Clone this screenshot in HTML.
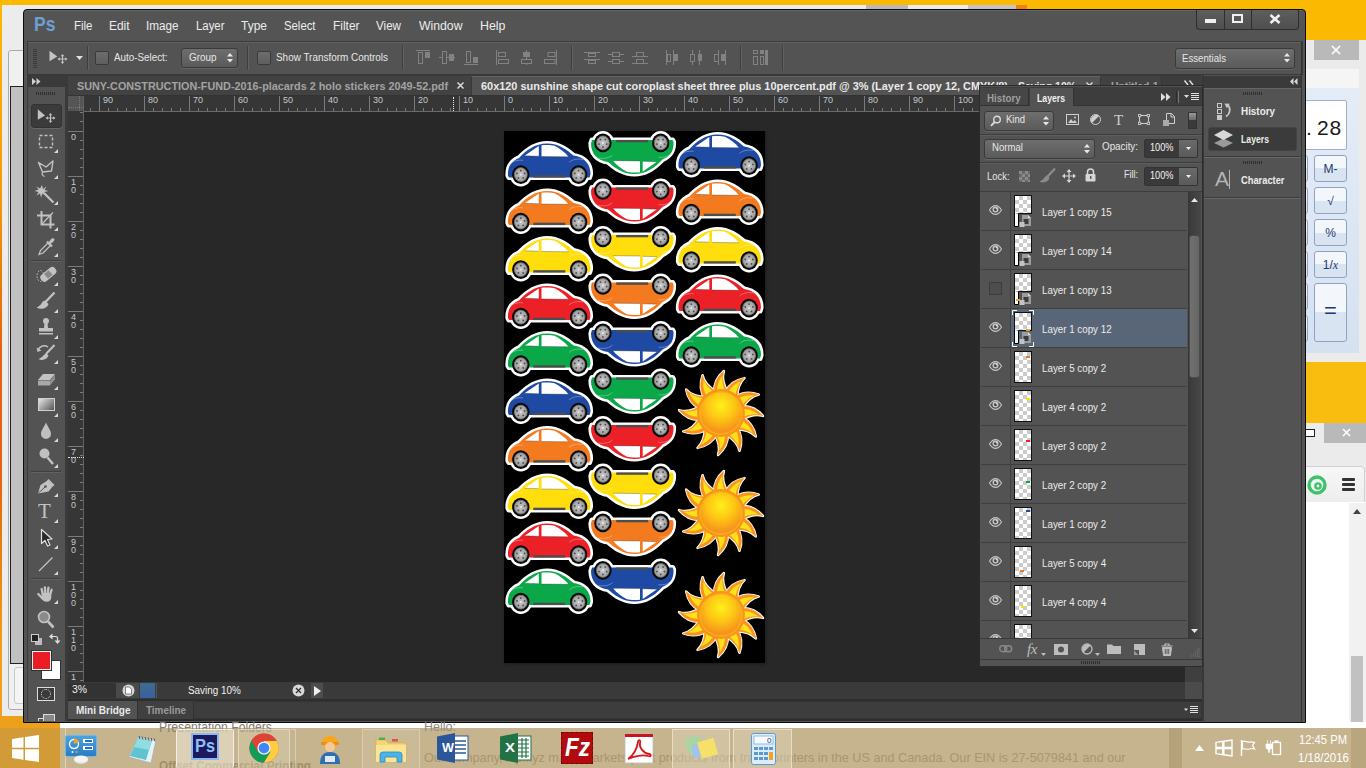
<!DOCTYPE html>
<html><head><meta charset="utf-8"><title>Photoshop</title>
<style>
*{box-sizing:border-box;margin:0;padding:0}
html,body{width:1366px;height:768px;overflow:hidden;background:#fcb902;font-family:"Liberation Sans",sans-serif;font-size:11px;color:#e6e6e6}
.a,div,span,svg{position:absolute}
div,span{white-space:nowrap}
svg{overflow:visible}
.t{color:#e6e6e6;font-size:11px;line-height:14px;letter-spacing:-0.2px}
.m{font-size:13.5px;line-height:16px;color:#e9e9e9;top:18px;letter-spacing:-0.3px}
.sep{width:1px;background:#3e3e3e;border-right:1px solid #626262;width:2px}
.cb{width:14px;height:14px;border:1px solid #3a3a3a;border-radius:2px;background:linear-gradient(#6d6d6d,#5e5e5e)}
.dd{border:1px solid #3a3a3a;border-radius:3px;background:linear-gradient(#6e6e6e,#5a5a5a);box-shadow:0 1px 0 #646464}
.rt{font-size:9px;line-height:9px;color:#c3c9cf;letter-spacing:0}
.lrow{left:981px;width:206px;height:39px;border-bottom:1px solid #3f3f3f}
.ln{left:59px;top:12px;font-size:11px;line-height:14px;color:#ececec;letter-spacing:-0.15px}
.th{left:33px;top:3px;width:18px;height:32px;border:1px solid #111;background-color:#fff;background-image:linear-gradient(45deg,#ccc 25%,transparent 25%,transparent 75%,#ccc 75%),linear-gradient(45deg,#ccc 25%,transparent 25%,transparent 75%,#ccc 75%);background-size:8px 8px;background-position:0 0,4px 4px}
.eyec{left:0;top:0;width:30px;height:38px;border-right:1px solid #3f3f3f}
</style></head><body>
<div id="desk" style="left:0;top:0;width:1366px;height:768px;background:#fcb902"><div style="left:0;top:0;width:2px;height:768px;background:linear-gradient(#fcb902 0,#f59a08 25%,#e8640a 45%,#e8640a 62%,#f0a01c 85%,#f0a01c 100%)"></div><div style="left:2px;top:5px;width:30px;height:711px;background:#ececec"></div><div style="left:8px;top:50px;width:20px;height:660px;background:#f0f0f0;border:1px solid #ababab;border-radius:3px"></div><div style="left:10px;top:86px;width:20px;height:578px;background:#c1c1c1;border:1px solid #222"></div><div style="left:14px;top:667px;width:14px;height:37px;background:#f4f4f4;border:1px solid #c8c8c8;border-radius:3px"></div><div style="left:0;top:716px;width:60px;height:14px;background:#eda11a"></div><div style="left:2px;top:5px;width:1015px;height:6px;background:#ececec"></div><div style="left:866px;top:5px;width:42px;height:6px;background:#b9b9b9"></div><div style="left:968px;top:5px;width:48px;height:6px;background:#c4c4c4"></div><div style="left:1016px;top:5px;width:11px;height:6px;background:#f0801a"></div><div style="left:1300px;top:40px;width:66px;height:392px;background:#ebebeb"></div><div style="left:1314px;top:40px;width:45px;height:20px;background:#b9b9b9"></div><svg style="left:1331px;top:45px" width="10" height="10"><path d="M1 1L9 9M9 1L1 9" stroke="#fff" stroke-width="1.6" fill="none"/></svg><div style="left:1300px;top:69px;width:59px;height:19px;background:#f5f5f5"></div><div style="left:1300px;top:88px;width:59px;height:266px;background:linear-gradient(#e4ecf7,#d6e1f0)"></div><div style="left:1300px;top:100px;width:47px;height:50px;background:#fff;border:1px solid #9fb0c8;border-radius:2px"></div><div style="left:1306px;top:116px;font-size:21px;line-height:24px;color:#1a1a1a;letter-spacing:1.5px">.</div><div style="left:1317px;top:116px;font-size:21px;line-height:24px;color:#1a1a1a;letter-spacing:0.8px">28</div><div style="left:1314px;top:155px;width:33px;height:27px;border:1px solid #8fa3c0;border-radius:3px;background:linear-gradient(#f3f7fc 50%,#d9e4f2 50%)"></div><div style="left:1314px;top:162px;width:33px;text-align:center;font-size:12px;line-height:14px;color:#1e3a6e">M-</div><div style="left:1314px;top:187px;width:33px;height:27px;border:1px solid #8fa3c0;border-radius:3px;background:linear-gradient(#f3f7fc 50%,#d9e4f2 50%)"></div><div style="left:1314px;top:194px;width:33px;text-align:center;font-size:12px;line-height:14px;color:#1e3a6e">√</div><div style="left:1314px;top:219px;width:33px;height:27px;border:1px solid #8fa3c0;border-radius:3px;background:linear-gradient(#f3f7fc 50%,#d9e4f2 50%)"></div><div style="left:1314px;top:226px;width:33px;text-align:center;font-size:12px;line-height:14px;color:#1e3a6e">%</div><div style="left:1314px;top:251px;width:33px;height:27px;border:1px solid #8fa3c0;border-radius:3px;background:linear-gradient(#f3f7fc 50%,#d9e4f2 50%)"></div><div style="left:1314px;top:258px;width:33px;text-align:center;font-size:12px;line-height:14px;color:#1e3a6e">1/<i style="font-family:Liberation Serif,serif">x</i></div><div style="left:1290px;top:155px;width:18px;height:27px;border:1px solid #8fa3c0;border-radius:3px;background:linear-gradient(#f3f7fc 50%,#d9e4f2 50%)"></div><div style="left:1290px;top:187px;width:18px;height:27px;border:1px solid #8fa3c0;border-radius:3px;background:linear-gradient(#f3f7fc 50%,#d9e4f2 50%)"></div><div style="left:1290px;top:219px;width:18px;height:27px;border:1px solid #8fa3c0;border-radius:3px;background:linear-gradient(#f3f7fc 50%,#d9e4f2 50%)"></div><div style="left:1290px;top:251px;width:18px;height:27px;border:1px solid #8fa3c0;border-radius:3px;background:linear-gradient(#f3f7fc 50%,#d9e4f2 50%)"></div><div style="left:1290px;top:283px;width:18px;height:27px;border:1px solid #8fa3c0;border-radius:3px;background:linear-gradient(#f3f7fc 50%,#d9e4f2 50%)"></div><div style="left:1290px;top:315px;width:18px;height:27px;border:1px solid #8fa3c0;border-radius:3px;background:linear-gradient(#f3f7fc 50%,#d9e4f2 50%)"></div><div style="left:1314px;top:283px;width:33px;height:59px;border:1px solid #8fa3c0;border-radius:3px;background:linear-gradient(#f3f7fc 50%,#d9e4f2 50%)"></div><div style="left:1314px;top:298px;width:33px;text-align:center;font-size:22px;line-height:26px;color:#1e3a6e">=</div><div style="left:1300px;top:292px;width:59px;height:60px;background:transparent"></div><div style="left:1300px;top:353px;width:66px;height:10px;background:#ebebeb"></div><div style="left:1300px;top:362px;width:66px;height:61px;background:#f9bd10"></div><div style="left:1300px;top:423px;width:66px;height:305px;background:#ebebeb"></div><div style="left:1324px;top:423px;width:42px;height:20px;background:#b9b9b9"></div><svg style="left:1342px;top:428px" width="9" height="9"><path d="M1 1L8 8M8 1L1 8" stroke="#fff" stroke-width="1.5" fill="none"/></svg><div style="left:1304px;top:429px;width:11px;height:8px;border:1.5px solid #222;background:#fff"></div><div style="left:1300px;top:466px;width:65px;height:37px;background:linear-gradient(#f7f7f7,#ededed);border:1px solid #d0d0d0;border-radius:0 4px 0 0"></div><div style="left:1300px;top:502px;width:66px;height:226px;background:#fff"></div><div style="left:1349px;top:503px;width:17px;height:225px;background:#f1f1f1"></div><div style="left:1351px;top:656px;width:12px;height:73px;background:#c1c1c1"></div><svg style="left:1353px;top:509px" width="8" height="5"><path d="M0 5L4 0L8 5Z" fill="#444"/></svg><svg style="left:1306px;top:474px" width="22" height="22"><circle cx="11" cy="11" r="8" fill="none" stroke="#3bc46b" stroke-width="3.4"/><circle cx="12" cy="12" r="2.6" fill="none" stroke="#3bc46b" stroke-width="2.4"/></svg><div style="left:1342px;top:478px;width:13px;height:2.5px;background:#333;border-radius:1px;box-shadow:0 5px 0 #333,0 10px 0 #333"></div><div style="left:60px;top:722px;width:1306px;height:8px;background:#fff"></div></div><div id="ps" style="left:23px;top:9px;width:1283px;height:714px;background:#545454;border:1px solid #0c0c0c;border-radius:4px 4px 0 0;box-shadow:inset 0 1px 0 #666"></div><div style="left:34px;top:10px;font-size:21px;line-height:28px;color:#6c9fd2;font-weight:bold;transform-origin:0 0;transform:scaleX(0.8370);">Ps</div><div style="left:74px;top:18px;font-size:12px;line-height:16px;color:#ececec;transform-origin:0 0;transform:scaleX(0.9568);">File</div><div style="left:109px;top:18px;font-size:12px;line-height:16px;color:#ececec;transform-origin:0 0;transform:scaleX(0.9914);">Edit</div><div style="left:146px;top:18px;font-size:12px;line-height:16px;color:#ececec;transform-origin:0 0;transform:scaleX(0.9745);">Image</div><div style="left:196px;top:18px;font-size:12px;line-height:16px;color:#ececec;transform-origin:0 0;transform:scaleX(0.9494);">Layer</div><div style="left:240.5px;top:18px;font-size:12px;line-height:16px;color:#ececec;transform-origin:0 0;transform:scaleX(0.9994);">Type</div><div style="left:284px;top:18px;font-size:12px;line-height:16px;color:#ececec;transform-origin:0 0;transform:scaleX(0.9445);">Select</div><div style="left:333px;top:18px;font-size:12px;line-height:16px;color:#ececec;transform-origin:0 0;transform:scaleX(0.9938);">Filter</div><div style="left:375.5px;top:18px;font-size:12px;line-height:16px;color:#ececec;transform-origin:0 0;transform:scaleX(0.9693);">View</div><div style="left:419px;top:18px;font-size:12px;line-height:16px;color:#ececec;transform-origin:0 0;transform:scaleX(1.0192);">Window</div><div style="left:480px;top:18px;font-size:12px;line-height:16px;color:#ececec;transform-origin:0 0;transform:scaleX(1.0332);">Help</div><div style="left:1196px;top:10px;width:103px;height:20px;border:1px solid #2e2e2e;border-top:none;border-radius:0 0 4px 4px;background:linear-gradient(#5d5d5d,#4f4f4f)"></div><div style="left:1224px;top:10px;width:1px;height:19px;background:#2e2e2e"></div><div style="left:1251px;top:10px;width:1px;height:19px;background:#2e2e2e"></div><div style="left:1205px;top:19px;width:11px;height:4px;background:#f0f0f0"></div><div style="left:1232px;top:14px;width:11px;height:9px;border:2px solid #f0f0f0"></div><svg style="left:1269px;top:14px" width="12" height="10"><path d="M1.5 1L10.5 9M10.5 1L1.5 9" stroke="#f0f0f0" stroke-width="2.6" fill="none"/></svg><div style="left:27px;top:41px;width:1276px;height:34px;background:#535353;border:1px solid #3a3a3a;border-bottom:1px solid #383838"></div><div style="left:28px;top:42px;width:1274px;height:1px;background:#626262"></div><div style="left:33px;top:49px;width:4px;height:20px;background:repeating-linear-gradient(#3a3a3a 0,#3a3a3a 1px,transparent 1px,transparent 2px)"></div><svg style="left:48px;top:50px" width="22" height="16"><path d="M1.500 0.800L1.500 11.200L9.300 6.500Z" fill="#c4c4c4"/><path d="M14.500 5.500v7M11 9h7" stroke="#c4c4c4" stroke-width="1.100" fill="none"/><path d="M14.500 4l-1.800 2.300h3.600zM14.500 14l-1.800-2.300h3.600zM9.500 9l2.300-1.800v3.600zM19.500 9l-2.300-1.800v3.600z" fill="#c4c4c4"/></svg><svg style="left:76px;top:56px" width="7" height="4"><path d="M0 0h7L3.500 4z" fill="#e0e0e0"/></svg><div class="sep" style="left:87px;top:46px;height:24px"></div><div class="cb" style="left:95px;top:51px"></div><div style="left:114px;top:51px;font-size:10px;line-height:14px;color:#e6e6e6;transform-origin:0 0;transform:scaleX(0.9820);">Auto-Select:</div><div class="dd" style="left:181px;top:48px;width:57px;height:20px"></div><div style="left:189px;top:51px;font-size:10px;line-height:14px;color:#e6e6e6;transform-origin:0 0;transform:scaleX(0.9893);">Group</div><svg style="left:227px;top:53px" width="6" height="10"><path d="M0 3.500L3 0L6 3.500zM0 6L3 9.500L6 6z" fill="#e8e8e8"/></svg><div class="sep" style="left:247px;top:46px;height:24px"></div><div class="cb" style="left:257px;top:51px"></div><div style="left:276px;top:51px;font-size:10px;line-height:14px;color:#e6e6e6;transform-origin:0 0;transform:scaleX(0.9926);">Show Transform Controls</div><div class="sep" style="left:402px;top:46px;height:24px"></div><svg style="left:416px;top:50px" width="15" height="16"><path d="M0 0.500h14" stroke="#828282" stroke-width="1" fill="none"/><rect x="2.500" y="2.500" width="4" height="11" stroke="#828282" stroke-width="1" fill="none"/><rect x="9" y="2" width="5" height="6" fill="#828282"/></svg><svg style="left:439px;top:50px" width="17" height="16"><path d="M0 7.500h16" stroke="#828282" stroke-width="1" fill="none"/><rect x="3.500" y="1.500" width="4" height="12" fill="#535353" stroke="#828282"/><rect x="10" y="4" width="5" height="7" fill="#828282"/></svg><svg style="left:464px;top:50px" width="15" height="16"><path d="M0 14.500h14" stroke="#828282" stroke-width="1" fill="none"/><rect x="2.500" y="1.500" width="4" height="11" stroke="#828282" stroke-width="1" fill="none"/><rect x="9" y="7" width="5" height="6" fill="#828282"/></svg><svg style="left:496px;top:50px" width="14" height="16"><path d="M0.500 0v15" stroke="#828282" stroke-width="1" fill="none"/><rect x="2.500" y="2.500" width="7" height="4" stroke="#828282" stroke-width="1" fill="none"/><rect x="2.500" y="9.500" width="10" height="4" stroke="#828282" stroke-width="1" fill="none"/></svg><svg style="left:521px;top:50px" width="12" height="16"><path d="M5.500 0v15" stroke="#828282" stroke-width="1" fill="none"/><rect x="2" y="2" width="7" height="5" fill="#828282"/><rect x="0.500" y="9.500" width="10" height="4" fill="#535353" stroke="#828282"/></svg><svg style="left:544px;top:50px" width="14" height="16"><path d="M12.500 0v15" stroke="#828282" stroke-width="1" fill="none"/><rect x="4" y="2.500" width="7" height="4" stroke="#828282" stroke-width="1" fill="none"/><rect x="0.500" y="9.500" width="10.500" height="4" stroke="#828282" stroke-width="1" fill="none"/></svg><div class="sep" style="left:571px;top:46px;height:24px"></div><svg style="left:584px;top:50px" width="17" height="16"><path d="M0 2.500h16M0 9.500h16" stroke="#828282" stroke-width="1" fill="none"/><rect x="4.500" y="3.500" width="7" height="3" stroke="#828282" stroke-width="1" fill="none"/><rect x="4.500" y="10.500" width="7" height="3" stroke="#828282" stroke-width="1" fill="none"/></svg><svg style="left:608px;top:50px" width="17" height="16"><path d="M0 4.500h16M0 11.500h16" stroke="#828282" stroke-width="1" fill="none"/><rect x="4.500" y="2.500" width="7" height="4" fill="#535353" stroke="#828282"/><rect x="4.500" y="9.500" width="7" height="4" fill="#535353" stroke="#828282"/></svg><svg style="left:632px;top:50px" width="17" height="16"><path d="M0 6.500h16M0 13.500h16" stroke="#828282" stroke-width="1" fill="none"/><rect x="4.500" y="2.500" width="7" height="4" stroke="#828282" stroke-width="1" fill="none"/><rect x="4.500" y="9.500" width="7" height="4" stroke="#828282" stroke-width="1" fill="none"/></svg><svg style="left:666px;top:50px" width="13" height="16"><path d="M0.500 0v15M7.500 0v15" stroke="#828282" stroke-width="1" fill="none"/><rect x="1.500" y="4.500" width="3" height="7" stroke="#828282" stroke-width="1" fill="none"/><rect x="8" y="4" width="4" height="7" fill="#828282"/></svg><svg style="left:690px;top:50px" width="13" height="16"><path d="M2.500 0v15M9.500 0v15" stroke="#828282" stroke-width="1" fill="none"/><rect x="0.500" y="4.500" width="4" height="7" fill="#535353" stroke="#828282"/><rect x="8" y="4" width="4" height="7" fill="#828282"/></svg><svg style="left:713px;top:50px" width="14" height="16"><path d="M5.500 0v15M12.500 0v15" stroke="#828282" stroke-width="1" fill="none"/><rect x="1.500" y="4.500" width="4" height="7" stroke="#828282" stroke-width="1" fill="none"/><rect x="8" y="4" width="4" height="7" fill="#828282"/></svg><div class="sep" style="left:740px;top:46px;height:24px"></div><svg style="left:753px;top:50px" width="16" height="16"><rect x="0.500" y="0.500" width="4" height="3" stroke="#828282" stroke-width="1" fill="none"/><rect x="0.500" y="6.500" width="4" height="8" stroke="#828282" stroke-width="1" fill="none"/><rect x="7" y="0" width="4" height="4" fill="#828282"/><rect x="7.500" y="6.500" width="3" height="8" stroke="#828282" stroke-width="1" fill="none"/><rect x="12" y="0" width="3" height="15" fill="#828282"/></svg><div class="sep" style="left:782px;top:46px;height:24px"></div><div class="dd" style="left:1175px;top:48px;width:120px;height:21px"></div><div style="left:1182px;top:52px;font-size:10px;line-height:14px;color:#e6e6e6;transform-origin:0 0;transform:scaleX(0.9653);">Essentials</div><svg style="left:1284px;top:53px" width="6" height="10"><path d="M0 3.500L3 0L6 3.500zM0 6L3 9.500L6 6z" fill="#e8e8e8"/></svg><div style="left:27px;top:75px;width:1174px;height:20px;background:#3a3a3a"></div><div style="left:68px;top:76px;width:1133px;height:19px;background:#424242"></div><div style="left:27px;top:76px;width:38px;height:11px;background:#3a3a3a"></div><svg style="left:32px;top:78px" width="9" height="7"><path d="M0 0L4 3.500L0 7zM4.500 0L8.500 3.500L4.500 7z" fill="#d0d0d0"/></svg><div style="left:77px;top:79px;font-size:10.5px;line-height:14px;color:#a3a3a3;font-weight:bold;transform-origin:0 0;transform:scaleX(1.0305);">SUNY-CONSTRUCTION-FUND-2016-placards 2 holo stickers 2049-52.pdf</div><svg style="left:457px;top:82px" width="7" height="7"><path d="M0.500 0.500L6.500 6.500M6.500 0.500L0.500 6.500" stroke="#e0e0e0" stroke-width="1.4" fill="none"/></svg><div style="left:471px;top:76px;width:630px;height:19px;background:#535353;border-left:1px solid #383838;border-right:1px solid #383838;border-top:1px solid #626262"></div><div style="left:481px;top:79px;font-size:10.5px;line-height:14px;color:#eaeaea;font-weight:bold;transform-origin:0 0;transform:scaleX(1.0398);">60x120 sunshine shape cut coroplast sheet three plus 10percent.pdf @ 3% (Layer 1 copy 12, CMYK/8)</div><div style="left:1018px;top:79px;font-size:10.5px;line-height:14px;color:#eaeaea;font-weight:bold;transform-origin:0 0;transform:scaleX(0.9938);">Saving 10%</div><svg style="left:1086px;top:82px" width="7" height="7"><path d="M0.500 0.500L6.500 6.500M6.500 0.500L0.500 6.500" stroke="#e0e0e0" stroke-width="1.4" fill="none"/></svg><div style="left:1110.5px;top:79px;font-size:10.5px;line-height:14px;color:#a3a3a3;font-weight:bold;transform-origin:0 0;transform:scaleX(0.9811);">Untitled-1</div><div style="left:1161px;top:76px;width:1px;height:12px;background:#383838"></div><div style="left:1162px;top:76px;width:40px;height:12px;background:#3d3d3d"></div><svg style="left:1184px;top:80px" width="10" height="6"><path d="M0.500 0.500L4 5M5.500 0.500L9 5" stroke="#e0e0e0" stroke-width="1.4" fill="none"/></svg><div style="left:68px;top:682px;width:1134px;height:18px;background:#3a3a3a"></div><div style="left:68px;top:683px;width:50px;height:15px;background:#333"></div><div style="left:71.5px;top:683px;font-size:10px;line-height:14px;color:#f0f0f0;transform-origin:0 0;transform:scaleX(1.0377);">3%</div><div style="left:116px;top:683px;width:23px;height:15px;background:#4a4a4a"></div><svg style="left:122px;top:684px" width="13" height="13"><circle cx="6.500" cy="6.500" r="6" fill="#d6d6d6"/><path d="M3.500 3h4l2 2.500v4.500h-6z" fill="#fff" stroke="#666" stroke-width="0.800"/></svg><div style="left:140px;top:683px;width:15px;height:15px;background:linear-gradient(#3d6c8e,#3b5fa3)"></div><div style="left:156px;top:683px;width:1px;height:15px;background:#555"></div><div style="left:188px;top:684px;font-size:10px;line-height:14px;color:#f0f0f0;transform-origin:0 0;transform:scaleX(0.9873);">Saving 10%</div><svg style="left:292px;top:684px" width="13" height="13"><circle cx="6.500" cy="6.500" r="6" fill="#d8d8d8"/><path d="M4 4l5 5M9 4l-5 5" stroke="#333" stroke-width="1.300"/></svg><div style="left:311px;top:683px;width:12px;height:15px;background:#4d4d4d"></div><svg style="left:314px;top:686px" width="7" height="10"><path d="M0 0L7 5L0 10z" fill="#f0f0f0"/></svg><div style="left:27px;top:699px;width:1176px;height:22px;background:#2e2e2e"></div><div style="left:68px;top:701px;width:1134px;height:18px;background:#3d3d3d;border:1px solid #333"></div><div style="left:68px;top:701px;width:70px;height:18px;background:#535353;border-right:1px solid #333"></div><div style="left:75.5px;top:703px;font-size:10.5px;line-height:14px;color:#eaeaea;font-weight:bold;transform-origin:0 0;transform:scaleX(0.9533);">Mini Bridge</div><div style="left:138px;top:701px;width:56px;height:18px;border-right:1px solid #333;background:#404040"></div><div style="left:145.5px;top:703px;font-size:10.5px;line-height:14px;color:#9a9a9a;font-weight:bold;transform-origin:0 0;transform:scaleX(0.9432);">Timeline</div><svg style="left:1184px;top:706px" width="14" height="8"><path d="M0 2.500h4L2 5z" fill="#e0e0e0"/><path d="M6 0.500h8M6 2.500h8M6 4.500h8M6 6.500h8" stroke="#e0e0e0" stroke-width="1"/></svg><div style="left:1202px;top:75px;width:2px;height:646px;background:#383838"></div><div style="left:1204px;top:75px;width:98px;height:646px;background:#535353"></div><div style="left:1204px;top:76px;width:98px;height:12px;background:#3a3a3a"></div><svg style="left:1290px;top:78px" width="8" height="7"><path d="M3.500 0L0 3.500L3.500 7zM7.500 0L4 3.500L7.500 7z" fill="#d8d8d8"/></svg><div style="left:1204px;top:88px;width:98px;height:1px;background:#666"></div><div style="left:1243px;top:92px;width:20px;height:3px;background:repeating-linear-gradient(90deg,#2f2f2f 0,#2f2f2f 1px,transparent 1px,transparent 2px)"></div><svg style="left:1217px;top:102px" width="18" height="18"><rect x="0.500" y="1.500" width="4" height="4" fill="none" stroke="#c8c8c8"/><rect x="0.500" y="7.500" width="4" height="4" fill="none" stroke="#c8c8c8"/><rect x="0" y="13" width="5" height="5" fill="#c8c8c8"/><path d="M9 14.500C13.500 11.500 14 6 10.500 3" fill="none" stroke="#c8c8c8" stroke-width="1.700"/><path d="M7.500 1.500L12.800 1.800L9.800 6.200z" fill="#c8c8c8"/></svg><div style="left:1241px;top:104px;font-size:10.5px;line-height:14px;color:#ececec;font-weight:bold;transform-origin:0 0;transform:scaleX(0.9399);">History</div><div style="left:1208px;top:127px;width:89px;height:24px;background:#3b3b3b;border:1px solid #444;border-radius:3px"></div><svg style="left:1214px;top:130px" width="19" height="18"><path d="M9.500 8.500L0 13l9.500 4.500L19 13z" fill="#9a9a9a"/><path d="M9.500 0L0 5l9.500 5L19 5z" fill="#d8d8d8"/></svg><div style="left:1241px;top:132px;font-size:10.5px;line-height:14px;color:#ececec;font-weight:bold;transform-origin:0 0;transform:scaleX(0.8269);">Layers</div><div style="left:1204px;top:156px;width:98px;height:2px;background:#3d3d3d;border-bottom:1px solid #666"></div><div style="left:1243px;top:161px;width:20px;height:3px;background:repeating-linear-gradient(90deg,#2f2f2f 0,#2f2f2f 1px,transparent 1px,transparent 2px)"></div><div style="left:1215px;top:167px;font-size:21px;line-height:24px;color:#b4b4b4">A</div><div style="left:1229px;top:170px;width:1px;height:19px;background:#b4b4b4"></div><div style="left:1241px;top:173px;font-size:10.5px;line-height:14px;color:#ececec;font-weight:bold;transform-origin:0 0;transform:scaleX(0.8873);">Character</div><div style="left:1204px;top:197px;width:98px;height:2px;background:#3d3d3d;border-bottom:1px solid #666"></div><div style="left:1301px;top:42px;width:1px;height:680px;background:#333"></div><div style="left:68px;top:95px;width:1134px;height:587px;background:#282828"></div><div style="left:68px;top:95px;width:1134px;height:1px;background:#333"></div><div style="left:68px;top:96px;width:1134px;height:16px;background:#363636;border-bottom:1px solid #6a6a6a"></div><div style="left:68px;top:96px;width:16px;height:586px;background:#363636;border-right:1px solid #626262"></div><div style="left:68px;top:96px;width:15px;height:15px;background:#555"></div><div style="left:79px;top:96px;width:1px;height:15px;border-left:1px dotted #7a7a7a"></div><div style="left:68px;top:107px;width:16px;height:1px;border-top:1px dotted #7a7a7a"></div><svg style="left:0;top:0" width="1366" height="768"><path d="M99.5 96v15M108.5 108v3M117.5 108v3M126.5 108v3M135.5 108v3M144.5 96v15M153.5 108v3M162.5 108v3M171.5 108v3M180.5 108v3M189.5 96v15M198.5 108v3M207.5 108v3M216.5 108v3M225.5 108v3M234.5 96v15M243.5 108v3M252.5 108v3M261.5 108v3M270.5 108v3M279.5 96v15M288.5 108v3M297.5 108v3M306.5 108v3M315.5 108v3M324.5 96v15M333.5 108v3M342.5 108v3M351.5 108v3M360.5 108v3M369.5 96v15M378.5 108v3M387.5 108v3M396.5 108v3M405.5 108v3M414.5 96v15M423.5 108v3M432.5 108v3M441.5 108v3M450.5 108v3M459.5 96v15M468.5 108v3M477.5 108v3M486.5 108v3M495.5 108v3M504.5 96v15M513.5 108v3M522.5 108v3M531.5 108v3M540.5 108v3M549.5 96v15M558.5 108v3M567.5 108v3M576.5 108v3M585.5 108v3M594.5 96v15M603.5 108v3M612.5 108v3M621.5 108v3M630.5 108v3M639.5 96v15M648.5 108v3M657.5 108v3M666.5 108v3M675.5 108v3M684.5 96v15M693.5 108v3M702.5 108v3M711.5 108v3M720.5 108v3M729.5 96v15M738.5 108v3M747.5 108v3M756.5 108v3M765.5 108v3M774.5 96v15M783.5 108v3M792.5 108v3M801.5 108v3M810.5 108v3M819.5 96v15M828.5 108v3M837.5 108v3M846.5 108v3M855.5 108v3M864.5 96v15M873.5 108v3M882.5 108v3M891.5 108v3M900.5 108v3M909.5 96v15M918.5 108v3M927.5 108v3M936.5 108v3M945.5 108v3M954.5 96v15M963.5 108v3M972.5 108v3M981.5 108v3M990.5 108v3M999.5 96v15M1008.5 108v3M1017.5 108v3M1026.5 108v3M1035.5 108v3M1044.5 96v15M1053.5 108v3M1062.5 108v3M1071.5 108v3M1080.5 108v3M1089.5 96v15M1098.5 108v3M1107.5 108v3M1116.5 108v3M1125.5 108v3M1134.5 96v15M1143.5 108v3M1152.5 108v3M1161.5 108v3M1170.5 108v3M1179.5 96v15M1188.5 108v3M1197.5 108v3M90.5 108v3" stroke="#7a7a7a" stroke-width="1" fill="none"/><path d="M68 131.5h15M80 140.5h3M80 149.5h3M80 158.5h3M80 167.5h3M68 176.5h15M80 185.5h3M80 194.5h3M80 203.5h3M80 212.5h3M68 221.5h15M80 230.5h3M80 239.5h3M80 248.5h3M80 257.5h3M68 266.5h15M80 275.5h3M80 284.5h3M80 293.5h3M80 302.5h3M68 311.5h15M80 320.5h3M80 329.5h3M80 338.5h3M80 347.5h3M68 356.5h15M80 365.5h3M80 374.5h3M80 383.5h3M80 392.5h3M68 401.5h15M80 410.5h3M80 419.5h3M80 428.5h3M80 437.5h3M68 446.5h15M80 455.5h3M80 464.5h3M80 473.5h3M80 482.5h3M68 491.5h15M80 500.5h3M80 509.5h3M80 518.5h3M80 527.5h3M68 536.5h15M80 545.5h3M80 554.5h3M80 563.5h3M80 572.5h3M68 581.5h15M80 590.5h3M80 599.5h3M80 608.5h3M80 617.5h3M68 626.5h15M80 635.5h3M80 644.5h3M80 653.5h3M80 662.5h3M68 671.5h15M80 680.5h3M80 112.5h3M80 121.5h3" stroke="#7a7a7a" stroke-width="1" fill="none"/></svg><div class="rt" style="left:103px;top:96px">90</div><div class="rt" style="left:148px;top:96px">80</div><div class="rt" style="left:193px;top:96px">70</div><div class="rt" style="left:238px;top:96px">60</div><div class="rt" style="left:283px;top:96px">50</div><div class="rt" style="left:328px;top:96px">40</div><div class="rt" style="left:373px;top:96px">30</div><div class="rt" style="left:418px;top:96px">20</div><div class="rt" style="left:463px;top:96px">10</div><div class="rt" style="left:508px;top:96px">0</div><div class="rt" style="left:553px;top:96px">10</div><div class="rt" style="left:598px;top:96px">20</div><div class="rt" style="left:643px;top:96px">30</div><div class="rt" style="left:688px;top:96px">40</div><div class="rt" style="left:733px;top:96px">50</div><div class="rt" style="left:778px;top:96px">60</div><div class="rt" style="left:823px;top:96px">70</div><div class="rt" style="left:868px;top:96px">80</div><div class="rt" style="left:913px;top:96px">90</div><div class="rt" style="left:958px;top:96px">100</div><div class="rt" style="left:69px;top:133px;width:9px;text-align:center">0</div><div class="rt" style="left:69px;top:178px;width:9px;text-align:center">1</div><div class="rt" style="left:69px;top:186px;width:9px;text-align:center">0</div><div class="rt" style="left:69px;top:223px;width:9px;text-align:center">2</div><div class="rt" style="left:69px;top:231px;width:9px;text-align:center">0</div><div class="rt" style="left:69px;top:268px;width:9px;text-align:center">3</div><div class="rt" style="left:69px;top:276px;width:9px;text-align:center">0</div><div class="rt" style="left:69px;top:313px;width:9px;text-align:center">4</div><div class="rt" style="left:69px;top:321px;width:9px;text-align:center">0</div><div class="rt" style="left:69px;top:358px;width:9px;text-align:center">5</div><div class="rt" style="left:69px;top:366px;width:9px;text-align:center">0</div><div class="rt" style="left:69px;top:403px;width:9px;text-align:center">6</div><div class="rt" style="left:69px;top:411px;width:9px;text-align:center">0</div><div class="rt" style="left:69px;top:448px;width:9px;text-align:center">7</div><div class="rt" style="left:69px;top:456px;width:9px;text-align:center">0</div><div class="rt" style="left:69px;top:493px;width:9px;text-align:center">8</div><div class="rt" style="left:69px;top:501px;width:9px;text-align:center">0</div><div class="rt" style="left:69px;top:538px;width:9px;text-align:center">9</div><div class="rt" style="left:69px;top:546px;width:9px;text-align:center">0</div><div class="rt" style="left:69px;top:583px;width:9px;text-align:center">1</div><div class="rt" style="left:69px;top:591px;width:9px;text-align:center">0</div><div class="rt" style="left:69px;top:599px;width:9px;text-align:center">0</div><div class="rt" style="left:69px;top:628px;width:9px;text-align:center">1</div><div class="rt" style="left:69px;top:636px;width:9px;text-align:center">1</div><div class="rt" style="left:69px;top:644px;width:9px;text-align:center">0</div><div class="rt" style="left:69px;top:673px;width:9px;text-align:center">1</div><div style="left:453px;top:97px;width:1px;height:14px;border-left:1px dotted #eee"></div><div style="left:68px;top:457px;width:16px;height:1px;border-top:1px dotted #ddd"></div><div style="left:504px;top:131px;width:261px;height:532px;background:#000;box-shadow:1px 1px 3px rgba(0,0,0,.35)"></div><svg style="left:0;top:0" width="1366" height="768">
<defs>
<radialGradient id="sg" cx="0.5" cy="0.32" r="0.62"><stop offset="0" stop-color="#fff01a"/><stop offset="0.55" stop-color="#fdc414"/><stop offset="1" stop-color="#f7941d"/></radialGradient>
<radialGradient id="wg" cx="0.5" cy="0.5" r="0.5"><stop offset="0" stop-color="#8a8a8a"/><stop offset="0.3" stop-color="#bdbdbd"/><stop offset="1" stop-color="#9c9c9c"/></radialGradient>
<path id="cb" d="M2 35C1.500 25 6 20.500 13 17.500C20 10 29 3 41 3C53 3 61 9.500 67.500 15C78 16.500 84.500 23 84.500 33.500L83.500 37L3 37Z"/>
<g id="wh"><ellipse rx="8.700" ry="9.300" fill="#0a0a0a"/><ellipse rx="6.400" ry="6.900" fill="url(#wg)"/><ellipse rx="6.400" ry="6.900" fill="none" stroke="#7d7d7d" stroke-width="0.800"/><g fill="#4a4a4a"><circle cx="0" cy="-4" r="0.900"/><circle cx="3.800" cy="-1.200" r="0.900"/><circle cx="2.400" cy="3.300" r="0.900"/><circle cx="-2.400" cy="3.300" r="0.900"/><circle cx="-3.800" cy="-1.200" r="0.900"/></g><circle r="1.300" fill="#e0e0e0"/></g>
<g id="car">
<use href="#cb" fill="#fff" stroke="#fff" stroke-width="5.200" stroke-linejoin="round"/>
<ellipse cx="14.800" cy="34.100" rx="11.200" ry="11.900" fill="#fff"/><ellipse cx="72.600" cy="34.100" rx="11.200" ry="11.900" fill="#fff"/>
<use href="#cb" fill="currentColor"/>
<path d="M18.500 15.300L32.800 5.600L32.800 15.700Z" fill="#fff"/>
<path d="M35.500 4.800C41 4.300 46 4.600 48.500 5.300C54 8 59 12 62.500 16.300L35.500 16Z" fill="#fff"/>
<path d="M18.500 15.300L32.800 15.700M35.500 16L62.500 16.300" stroke="#222" stroke-width="0.500" opacity="0.600"/>
<path d="M4 24C7 20.500 11 19.300 17 19.800" stroke="#fff" stroke-width="0.900" fill="none" opacity="0.350"/>
<path d="M63 22C66 19 71 18 77 19" stroke="#fff" stroke-width="0.900" fill="none" opacity="0.350"/>
<rect x="27.300" y="34.700" width="32" height="2.400" fill="#4d4d4d"/>
<use href="#wh" x="14.800" y="34.100"/><use href="#wh" x="72.600" y="34.100"/>
</g>
<path id="ray" d="M-7 -21C-7.500 -30 -4 -37 3 -43C0.500 -36 2.500 -29 7 -21Z"/>
<g id="sun" transform="scale(0.975)">
<g fill="#fff" stroke="#fff" stroke-width="2.600" stroke-linejoin="round"><use href="#ray" transform="rotate(0)"/><use href="#ray" transform="rotate(30)"/><use href="#ray" transform="rotate(60)"/><use href="#ray" transform="rotate(90)"/><use href="#ray" transform="rotate(120)"/><use href="#ray" transform="rotate(150)"/><use href="#ray" transform="rotate(180)"/><use href="#ray" transform="rotate(210)"/><use href="#ray" transform="rotate(240)"/><use href="#ray" transform="rotate(270)"/><use href="#ray" transform="rotate(300)"/><use href="#ray" transform="rotate(330)"/></g>
<g fill="#f7931e" stroke="#f7931e" stroke-width="0.600" stroke-linejoin="round"><use href="#ray" transform="rotate(0)"/><use href="#ray" transform="rotate(30)"/><use href="#ray" transform="rotate(60)"/><use href="#ray" transform="rotate(90)"/><use href="#ray" transform="rotate(120)"/><use href="#ray" transform="rotate(150)"/><use href="#ray" transform="rotate(180)"/><use href="#ray" transform="rotate(210)"/><use href="#ray" transform="rotate(240)"/><use href="#ray" transform="rotate(270)"/><use href="#ray" transform="rotate(300)"/><use href="#ray" transform="rotate(330)"/></g>
<g fill="#ffe11b" transform="scale(0.97)"><path d="M-4.200 -23C-4.200 -30 -2 -35 1.500 -39.500C1 -33 2 -28 4.500 -23Z" transform="rotate(0)"/><path d="M-4.200 -23C-4.200 -30 -2 -35 1.500 -39.500C1 -33 2 -28 4.500 -23Z" transform="rotate(30)"/><path d="M-4.200 -23C-4.200 -30 -2 -35 1.500 -39.500C1 -33 2 -28 4.500 -23Z" transform="rotate(60)"/><path d="M-4.200 -23C-4.200 -30 -2 -35 1.500 -39.500C1 -33 2 -28 4.500 -23Z" transform="rotate(90)"/><path d="M-4.200 -23C-4.200 -30 -2 -35 1.500 -39.500C1 -33 2 -28 4.500 -23Z" transform="rotate(120)"/><path d="M-4.200 -23C-4.200 -30 -2 -35 1.500 -39.500C1 -33 2 -28 4.500 -23Z" transform="rotate(150)"/><path d="M-4.200 -23C-4.200 -30 -2 -35 1.500 -39.500C1 -33 2 -28 4.500 -23Z" transform="rotate(180)"/><path d="M-4.200 -23C-4.200 -30 -2 -35 1.500 -39.500C1 -33 2 -28 4.500 -23Z" transform="rotate(210)"/><path d="M-4.200 -23C-4.200 -30 -2 -35 1.500 -39.500C1 -33 2 -28 4.500 -23Z" transform="rotate(240)"/><path d="M-4.200 -23C-4.200 -30 -2 -35 1.500 -39.500C1 -33 2 -28 4.500 -23Z" transform="rotate(270)"/><path d="M-4.200 -23C-4.200 -30 -2 -35 1.500 -39.500C1 -33 2 -28 4.500 -23Z" transform="rotate(300)"/><path d="M-4.200 -23C-4.200 -30 -2 -35 1.500 -39.500C1 -33 2 -28 4.500 -23Z" transform="rotate(330)"/></g>
<circle r="24.500" fill="#f7931e"/><circle r="22.300" fill="#fbb117"/><circle r="21" fill="url(#sg)"/>
</g>
</defs>
<use href="#car" x="506" y="140.5" color="#1f4aa3"/><use href="#car" x="506" y="188.0" color="#f47a20"/><use href="#car" x="506" y="235.5" color="#ffde0c"/><use href="#car" x="506" y="283.0" color="#ec2027"/><use href="#car" x="506" y="330.5" color="#0ba84a"/><use href="#car" x="506" y="378.0" color="#1f4aa3"/><use href="#car" x="506" y="425.5" color="#f47a20"/><use href="#car" x="506" y="473.0" color="#ffde0c"/><use href="#car" x="506" y="520.5" color="#ec2027"/><use href="#car" x="506" y="568.0" color="#0ba84a"/><use href="#car" transform="translate(675.5 177.0) rotate(180)" color="#0ba84a"/><use href="#car" transform="translate(675.5 224.5) rotate(180)" color="#ec2027"/><use href="#car" transform="translate(675.5 272.0) rotate(180)" color="#ffde0c"/><use href="#car" transform="translate(675.5 319.5) rotate(180)" color="#f47a20"/><use href="#car" transform="translate(675.5 367.0) rotate(180)" color="#1f4aa3"/><use href="#car" transform="translate(675.5 414.5) rotate(180)" color="#0ba84a"/><use href="#car" transform="translate(675.5 462.0) rotate(180)" color="#ec2027"/><use href="#car" transform="translate(675.5 509.5) rotate(180)" color="#ffde0c"/><use href="#car" transform="translate(675.5 557.0) rotate(180)" color="#f47a20"/><use href="#car" transform="translate(675.5 604.5) rotate(180)" color="#1f4aa3"/><use href="#car" x="676.500" y="131.5" color="#1f4aa3"/><use href="#car" x="676.500" y="179.0" color="#f47a20"/><use href="#car" x="676.500" y="226.5" color="#ffde0c"/><use href="#car" x="676.500" y="274.0" color="#ec2027"/><use href="#car" x="676.500" y="321.5" color="#0ba84a"/><use href="#sun" x="721" y="413"/><use href="#sun" x="721" y="513"/><use href="#sun" x="721" y="615"/></svg><div style="left:1185px;top:112px;width:17px;height:570px;background:#3f3f3f"></div><div style="left:1185px;top:682px;width:17px;height:17px;background:#4b4b4b"></div><div style="left:979px;top:85px;width:224px;height:582px;background:#535353;border:1px solid #2b2b2b"></div><div style="left:980px;top:87px;width:222px;height:19px;background:#3d3d3d;border-bottom:1px solid #333"></div><div style="left:980px;top:88px;width:49px;height:17px;background:#464646;border-right:1px solid #333"></div><div style="left:987px;top:91px;font-size:10.5px;line-height:14px;color:#9e9e9e;font-weight:bold;transform-origin:0 0;transform:scaleX(0.9316);">History</div><div style="left:1030px;top:88px;width:44px;height:18px;background:#535353;border-right:1px solid #333"></div><div style="left:1037px;top:91px;font-size:10.5px;line-height:14px;color:#f0f0f0;font-weight:bold;transform-origin:0 0;transform:scaleX(0.8269);">Layers</div><svg style="left:1161px;top:93px" width="10" height="8"><path d="M0 0L4.500 4L0 8zM5 0L9.500 4L5 8z" fill="#e0e0e0"/></svg><div style="left:1176px;top:91px;width:1px;height:12px;background:#2e2e2e;box-shadow:2px 0 0 #777"></div><svg style="left:1184px;top:93px" width="15" height="8"><path d="M0 2h5L2.500 5z" fill="#e0e0e0"/><path d="M7 0.500h8M7 2.500h8M7 4.500h8M7 6.500h8" stroke="#e0e0e0" stroke-width="1"/></svg><div class="dd" style="left:984px;top:111px;width:70px;height:20px"></div><svg style="left:990px;top:115px" width="12" height="12"><circle cx="7" cy="4.500" r="3.300" fill="none" stroke="#ddd" stroke-width="1.400"/><path d="M4.700 7L1 10.800" stroke="#ddd" stroke-width="1.800"/></svg><div style="left:1006px;top:113px;font-size:10px;line-height:14px;color:#e6e6e6;transform-origin:0 0;transform:scaleX(0.9492);">Kind</div><svg style="left:1043px;top:116px" width="6" height="10"><path d="M0 3.500L3 0L6 3.500zM0 6L3 9.500L6 6z" fill="#e8e8e8"/></svg><svg style="left:1066px;top:114px" width="14" height="12"><rect x="0.500" y="0.500" width="12" height="10" fill="none" stroke="#cfcfcf"/><path d="M2 9l3-4l2 2.500l2-1.500l2 3z" fill="#cfcfcf"/><circle cx="9" cy="3.500" r="1" fill="#cfcfcf"/></svg><svg style="left:1090px;top:114px" width="12" height="12"><circle cx="5.500" cy="5.500" r="5" fill="none" stroke="#cfcfcf"/><path d="M2 9A5 5 0 0 1 9 2z" fill="#cfcfcf"/></svg><div style="left:1114px;top:112px;font-family:'Liberation Serif',serif;font-size:15px;line-height:16px;color:#cfcfcf">T</div><svg style="left:1138px;top:114px" width="13" height="12"><rect x="1.500" y="1.500" width="9" height="8" fill="none" stroke="#cfcfcf"/><g fill="#535353" stroke="#cfcfcf" stroke-width="0.800"><rect x="0.400" y="0.400" width="2.400" height="2.400"/><rect x="9.200" y="0.400" width="2.400" height="2.400"/><rect x="0.400" y="8.200" width="2.400" height="2.400"/><rect x="9.200" y="8.200" width="2.400" height="2.400"/></g></svg><svg style="left:1163px;top:113px" width="12" height="14"><path d="M3.500 0.500h5l3 3v7h-8z" fill="none" stroke="#cfcfcf"/><path d="M8 0.500v3.500h3.500" fill="none" stroke="#cfcfcf"/><rect x="0" y="7" width="6" height="6" fill="#aaa"/></svg><div style="left:1188px;top:112px;width:9px;height:17px;background:#3a3a3a;border:1px solid #333"></div><div style="left:1189px;top:113px;width:7px;height:7px;background:linear-gradient(#999,#6a6a6a)"></div><div style="left:980px;top:134px;width:222px;height:1px;background:#3d3d3d;box-shadow:0 1px 0 #5e5e5e"></div><div class="dd" style="left:984px;top:139px;width:111px;height:20px"></div><div style="left:992px;top:141px;font-size:10px;line-height:14px;color:#e6e6e6;transform-origin:0 0;transform:scaleX(0.9618);">Normal</div><svg style="left:1084px;top:144px" width="6" height="10"><path d="M0 3.500L3 0L6 3.500zM0 6L3 9.500L6 6z" fill="#e8e8e8"/></svg><div style="left:1102px;top:140px;font-size:10px;line-height:14px;color:#e6e6e6;transform-origin:0 0;transform:scaleX(0.9813);">Opacity:</div><div style="left:1144px;top:139px;width:54px;height:19px;background:#3a3a3a;border:1px solid #333;border-radius:2px"></div><div style="left:1179px;top:140px;width:18px;height:17px;background:linear-gradient(#6a6a6a,#5a5a5a)"></div><div style="left:1149.5px;top:141px;font-size:10px;line-height:14px;color:#f4f4f4;transform-origin:0 0;transform:scaleX(0.9187);">100%</div><svg style="left:1186px;top:147px" width="5" height="3"><path d="M0 0h5L2.500 3z" fill="#eee"/></svg><div style="left:980px;top:162px;width:222px;height:1px;background:#3d3d3d;box-shadow:0 1px 0 #5e5e5e"></div><div style="left:986.5px;top:170px;font-size:10px;line-height:14px;color:#e6e6e6;transform-origin:0 0;transform:scaleX(0.9413);">Lock:</div><div style="left:1019px;top:171px;width:11px;height:11px;background-color:#8a8a8a;background-image:linear-gradient(45deg,#686868 25%,transparent 25%,transparent 75%,#686868 75%),linear-gradient(45deg,#686868 25%,transparent 25%,transparent 75%,#686868 75%);background-size:6px 6px;background-position:0 0,3px 3px"></div><svg style="left:1039px;top:168px" width="17" height="15"><path d="M16 0.500L8.500 8.500" stroke="#8c8c8c" stroke-width="2.200"/><path d="M8 7.500C5.500 8 5 12 0.500 13.500C4 15.500 9.500 14 10.500 9.800z" fill="#8c8c8c"/></svg><svg style="left:1062px;top:169px" width="14" height="14"><path d="M7 2v10M2 7h10" stroke="#d6d6d6" stroke-width="1.200" fill="none"/><path d="M7 0L4.500 3h5zM7 14L4.500 11h5zM0 7L3 4.500v5zM14 7L11 4.500v5z" fill="#d6d6d6"/></svg><svg style="left:1085px;top:168px" width="11" height="14"><path d="M2.500 6V4a3 3 0 0 1 6 0v2" fill="none" stroke="#d6d6d6" stroke-width="1.500"/><rect x="0.500" y="6" width="10" height="7.500" rx="1" fill="#d6d6d6"/><rect x="5" y="8" width="1.400" height="3" fill="#535353"/></svg><div style="left:1124px;top:168px;font-size:10px;line-height:14px;color:#e6e6e6;transform-origin:0 0;transform:scaleX(0.8999);">Fill:</div><div style="left:1144px;top:167px;width:54px;height:19px;background:#3a3a3a;border:1px solid #333;border-radius:2px"></div><div style="left:1179px;top:168px;width:18px;height:17px;background:linear-gradient(#6a6a6a,#5a5a5a)"></div><div style="left:1149.5px;top:169px;font-size:10px;line-height:14px;color:#f4f4f4;transform-origin:0 0;transform:scaleX(0.9187);">100%</div><svg style="left:1186px;top:175px" width="5" height="3"><path d="M0 0h5L2.500 3z" fill="#eee"/></svg><div style="left:980px;top:191px;width:222px;height:1px;background:#3d3d3d"></div><div style="left:981px;top:192px;width:207px;height:447px;overflow:hidden"><div class="lrow" style="left:0;top:0px;background:#535353"><div class="eyec" style="background:#535353"><svg style="left:8px;top:13px" width="13" height="10"><path d="M0.500 5C2.500 1.500 5 0.600 6.500 0.600C8 0.600 10.500 1.500 12.500 5C10.500 8.500 8 9.400 6.500 9.400C5 9.400 2.500 8.500 0.500 5Z" fill="#535353" stroke="#c4c4c4" stroke-width="1.100"/><circle cx="6.500" cy="4.600" r="3" fill="#c4c4c4"/><circle cx="6.500" cy="4.600" r="1.500" fill="#3a3a3a"/><circle cx="7.300" cy="3.800" r="0.700" fill="#eee"/></svg></div><div class="th" style="height:19px"></div><svg style="left:33px;top:21px" width="18" height="14"><path d="M0.500 0V13.500H4.500V0.500" fill="#fff" stroke="#000" stroke-width="1"/><path d="M8 2h6l3 3v8H8z" fill="#9c9c9c"/><path d="M14 2v3h3z" fill="#d8d8d8"/><rect x="9.500" y="6" width="5" height="5" fill="#3c3c3c"/><rect x="5.500" y="9" width="5" height="5" fill="#c2c2c2"/></svg><div style="left:60.5px;top:14px;font-size:10px;line-height:14px;color:#ececec;transform-origin:0 0;transform:scaleX(0.9780);">Layer 1 copy 15</div></div><div class="lrow" style="left:0;top:39px;background:#535353"><div class="eyec" style="background:#535353"><svg style="left:8px;top:13px" width="13" height="10"><path d="M0.500 5C2.500 1.500 5 0.600 6.500 0.600C8 0.600 10.500 1.500 12.500 5C10.500 8.500 8 9.400 6.500 9.400C5 9.400 2.500 8.500 0.500 5Z" fill="#535353" stroke="#c4c4c4" stroke-width="1.100"/><circle cx="6.500" cy="4.600" r="3" fill="#c4c4c4"/><circle cx="6.500" cy="4.600" r="1.500" fill="#3a3a3a"/><circle cx="7.300" cy="3.800" r="0.700" fill="#eee"/></svg></div><div class="th" style="height:19px"></div><svg style="left:33px;top:21px" width="18" height="14"><path d="M0.500 0V13.500H4.500V0.500" fill="#fff" stroke="#000" stroke-width="1"/><path d="M8 2h6l3 3v8H8z" fill="#9c9c9c"/><path d="M14 2v3h3z" fill="#d8d8d8"/><rect x="9.500" y="6" width="5" height="5" fill="#3c3c3c"/><rect x="5.500" y="9" width="5" height="5" fill="#c2c2c2"/></svg><div style="left:60.5px;top:14px;font-size:10px;line-height:14px;color:#ececec;transform-origin:0 0;transform:scaleX(0.9780);">Layer 1 copy 14</div></div><div class="lrow" style="left:0;top:78px;background:#535353"><div class="eyec" style="background:#535353"><div style="left:8px;top:12px;width:13px;height:13px;border:1px solid #3c3c3c;background:#4d4d4d"></div></div><div class="th" style="height:19px"></div><svg style="left:33px;top:21px" width="18" height="14"><path d="M0.500 0V13.500H4.500V0.500" fill="#fff" stroke="#000" stroke-width="1"/><path d="M8 2h6l3 3v8H8z" fill="#9c9c9c"/><path d="M14 2v3h3z" fill="#d8d8d8"/><rect x="9.500" y="6" width="5" height="5" fill="#3c3c3c"/><rect x="5.500" y="9" width="5" height="5" fill="#c2c2c2"/></svg><div style="left:35px;top:29px;width:4px;height:2px;background:#f7a21b"></div><div style="left:60.5px;top:14px;font-size:10px;line-height:14px;color:#ececec;transform-origin:0 0;transform:scaleX(0.9780);">Layer 1 copy 13</div></div><div class="lrow" style="left:0;top:117px;background:#596678"><div class="eyec" style="background:#535353"><svg style="left:8px;top:13px" width="13" height="10"><path d="M0.500 5C2.500 1.500 5 0.600 6.500 0.600C8 0.600 10.500 1.500 12.500 5C10.500 8.500 8 9.400 6.500 9.400C5 9.400 2.500 8.500 0.500 5Z" fill="#535353" stroke="#c4c4c4" stroke-width="1.100"/><circle cx="6.500" cy="4.600" r="3" fill="#c4c4c4"/><circle cx="6.500" cy="4.600" r="1.500" fill="#3a3a3a"/><circle cx="7.300" cy="3.800" r="0.700" fill="#eee"/></svg></div><div class="th" style="height:19px"></div><svg style="left:33px;top:21px" width="18" height="14"><path d="M0.500 0V13.500H4.500V0.500" fill="#fff" stroke="#000" stroke-width="1"/><path d="M8 2h6l3 3v8H8z" fill="#9c9c9c"/><path d="M14 2v3h3z" fill="#d8d8d8"/><rect x="9.500" y="6" width="5" height="5" fill="#3c3c3c"/><rect x="5.500" y="9" width="5" height="5" fill="#c2c2c2"/></svg><svg style="left:31px;top:1px" width="22" height="37"><path d="M0.500 5V0.500H5M17 0.500h4.500V5M21.500 32v4.500H17M5 36.500H0.500V32" fill="none" stroke="#fff" stroke-width="1"/></svg><div style="left:45px;top:20px;width:4px;height:2px;background:#f7a21b"></div><div style="left:60.5px;top:14px;font-size:10px;line-height:14px;color:#ececec;transform-origin:0 0;transform:scaleX(0.9780);">Layer 1 copy 12</div></div><div class="lrow" style="left:0;top:156px;background:#535353"><div class="eyec" style="background:#535353"><svg style="left:8px;top:13px" width="13" height="10"><path d="M0.500 5C2.500 1.500 5 0.600 6.500 0.600C8 0.600 10.500 1.500 12.500 5C10.500 8.500 8 9.400 6.500 9.400C5 9.400 2.500 8.500 0.500 5Z" fill="#535353" stroke="#c4c4c4" stroke-width="1.100"/><circle cx="6.500" cy="4.600" r="3" fill="#c4c4c4"/><circle cx="6.500" cy="4.600" r="1.500" fill="#3a3a3a"/><circle cx="7.300" cy="3.800" r="0.700" fill="#eee"/></svg></div><div class="th"></div><div style="left:45px;top:8px;width:4px;height:2px;background:#f47a20"></div><div style="left:60.5px;top:14px;font-size:10px;line-height:14px;color:#ececec;transform-origin:0 0;transform:scaleX(0.9780);">Layer 5 copy 2</div></div><div class="lrow" style="left:0;top:195px;background:#535353"><div class="eyec" style="background:#535353"><svg style="left:8px;top:13px" width="13" height="10"><path d="M0.500 5C2.500 1.500 5 0.600 6.500 0.600C8 0.600 10.500 1.500 12.500 5C10.500 8.500 8 9.400 6.500 9.400C5 9.400 2.500 8.500 0.500 5Z" fill="#535353" stroke="#c4c4c4" stroke-width="1.100"/><circle cx="6.500" cy="4.600" r="3" fill="#c4c4c4"/><circle cx="6.500" cy="4.600" r="1.500" fill="#3a3a3a"/><circle cx="7.300" cy="3.800" r="0.700" fill="#eee"/></svg></div><div class="th"></div><div style="left:45px;top:11px;width:4px;height:2px;background:#ffde0c"></div><div style="left:60.5px;top:14px;font-size:10px;line-height:14px;color:#ececec;transform-origin:0 0;transform:scaleX(0.9780);">Layer 4 copy 2</div></div><div class="lrow" style="left:0;top:234px;background:#535353"><div class="eyec" style="background:#535353"><svg style="left:8px;top:13px" width="13" height="10"><path d="M0.500 5C2.500 1.500 5 0.600 6.500 0.600C8 0.600 10.500 1.500 12.500 5C10.500 8.500 8 9.400 6.500 9.400C5 9.400 2.500 8.500 0.500 5Z" fill="#535353" stroke="#c4c4c4" stroke-width="1.100"/><circle cx="6.500" cy="4.600" r="3" fill="#c4c4c4"/><circle cx="6.500" cy="4.600" r="1.500" fill="#3a3a3a"/><circle cx="7.300" cy="3.800" r="0.700" fill="#eee"/></svg></div><div class="th"></div><div style="left:45px;top:14px;width:4px;height:2px;background:#ec2027"></div><div style="left:60.5px;top:14px;font-size:10px;line-height:14px;color:#ececec;transform-origin:0 0;transform:scaleX(0.9780);">Layer 3 copy 2</div></div><div class="lrow" style="left:0;top:273px;background:#535353"><div class="eyec" style="background:#535353"><svg style="left:8px;top:13px" width="13" height="10"><path d="M0.500 5C2.500 1.500 5 0.600 6.500 0.600C8 0.600 10.500 1.500 12.500 5C10.500 8.500 8 9.400 6.500 9.400C5 9.400 2.500 8.500 0.500 5Z" fill="#535353" stroke="#c4c4c4" stroke-width="1.100"/><circle cx="6.500" cy="4.600" r="3" fill="#c4c4c4"/><circle cx="6.500" cy="4.600" r="1.500" fill="#3a3a3a"/><circle cx="7.300" cy="3.800" r="0.700" fill="#eee"/></svg></div><div class="th"></div><div style="left:45px;top:16px;width:4px;height:2px;background:#0ba84a"></div><div style="left:60.5px;top:14px;font-size:10px;line-height:14px;color:#ececec;transform-origin:0 0;transform:scaleX(0.9780);">Layer 2 copy 2</div></div><div class="lrow" style="left:0;top:312px;background:#535353"><div class="eyec" style="background:#535353"><svg style="left:8px;top:13px" width="13" height="10"><path d="M0.500 5C2.500 1.500 5 0.600 6.500 0.600C8 0.600 10.500 1.500 12.500 5C10.500 8.500 8 9.400 6.500 9.400C5 9.400 2.500 8.500 0.500 5Z" fill="#535353" stroke="#c4c4c4" stroke-width="1.100"/><circle cx="6.500" cy="4.600" r="3" fill="#c4c4c4"/><circle cx="6.500" cy="4.600" r="1.500" fill="#3a3a3a"/><circle cx="7.300" cy="3.800" r="0.700" fill="#eee"/></svg></div><div class="th"></div><div style="left:45px;top:6px;width:4px;height:2px;background:#1f4aa3"></div><div style="left:60.5px;top:14px;font-size:10px;line-height:14px;color:#ececec;transform-origin:0 0;transform:scaleX(0.9780);">Layer 1 copy 2</div></div><div class="lrow" style="left:0;top:351px;background:#535353"><div class="eyec" style="background:#535353"><svg style="left:8px;top:13px" width="13" height="10"><path d="M0.500 5C2.500 1.500 5 0.600 6.500 0.600C8 0.600 10.500 1.500 12.500 5C10.500 8.500 8 9.400 6.500 9.400C5 9.400 2.500 8.500 0.500 5Z" fill="#535353" stroke="#c4c4c4" stroke-width="1.100"/><circle cx="6.500" cy="4.600" r="3" fill="#c4c4c4"/><circle cx="6.500" cy="4.600" r="1.500" fill="#3a3a3a"/><circle cx="7.300" cy="3.800" r="0.700" fill="#eee"/></svg></div><div class="th"></div><div style="left:39px;top:27px;width:4px;height:2px;background:#f47a20"></div><div style="left:60.5px;top:14px;font-size:10px;line-height:14px;color:#ececec;transform-origin:0 0;transform:scaleX(0.9780);">Layer 5 copy 4</div></div><div class="lrow" style="left:0;top:390px;background:#535353"><div class="eyec" style="background:#535353"><svg style="left:8px;top:13px" width="13" height="10"><path d="M0.500 5C2.500 1.500 5 0.600 6.500 0.600C8 0.600 10.500 1.500 12.500 5C10.500 8.500 8 9.400 6.500 9.400C5 9.400 2.500 8.500 0.500 5Z" fill="#535353" stroke="#c4c4c4" stroke-width="1.100"/><circle cx="6.500" cy="4.600" r="3" fill="#c4c4c4"/><circle cx="6.500" cy="4.600" r="1.500" fill="#3a3a3a"/><circle cx="7.300" cy="3.800" r="0.700" fill="#eee"/></svg></div><div class="th"></div><div style="left:40px;top:24px;width:4px;height:2px;background:#ffde0c"></div><div style="left:60.5px;top:14px;font-size:10px;line-height:14px;color:#ececec;transform-origin:0 0;transform:scaleX(0.9780);">Layer 4 copy 4</div></div><div class="lrow" style="left:0;top:429px;background:#535353"><div class="eyec" style="background:#535353"><svg style="left:8px;top:13px" width="13" height="10"><path d="M0.500 5C2.500 1.500 5 0.600 6.500 0.600C8 0.600 10.500 1.500 12.500 5C10.500 8.500 8 9.400 6.500 9.400C5 9.400 2.500 8.500 0.500 5Z" fill="#535353" stroke="#c4c4c4" stroke-width="1.100"/><circle cx="6.500" cy="4.600" r="3" fill="#c4c4c4"/><circle cx="6.500" cy="4.600" r="1.500" fill="#3a3a3a"/><circle cx="7.300" cy="3.800" r="0.700" fill="#eee"/></svg></div><div class="th"></div></div></div><div style="left:1188px;top:192px;width:13px;height:447px;background:linear-gradient(90deg,#3a3a3a,#474747);border-left:1px solid #363636"></div><svg style="left:1191px;top:198px" width="7" height="4"><path d="M0 4L3.500 0L7 4z" fill="#e8e8e8"/></svg><svg style="left:1191px;top:629px" width="7" height="4"><path d="M0 0h7L3.500 4z" fill="#e8e8e8"/></svg><div style="left:1189px;top:235px;width:11px;height:143px;background:linear-gradient(90deg,#707070,#666);border-radius:3px;border:1px solid #4a4a4a"></div><div style="left:980px;top:638px;width:222px;height:1px;background:#3a3a3a"></div><div style="left:980px;top:639px;width:222px;height:20px;background:#535353"></div><svg style="left:999px;top:645px" width="14" height="8"><rect x="0.700" y="0.700" width="7" height="6" rx="3" fill="none" stroke="#8a8a8a" stroke-width="1.400"/><rect x="5.700" y="0.700" width="7" height="6" rx="3" fill="none" stroke="#8a8a8a" stroke-width="1.400"/></svg><div style="left:1027px;top:641px;font-family:'Liberation Serif',serif;font-style:italic;font-size:15px;line-height:16px;color:#bdbdbd;letter-spacing:-0.5px">fx</div><svg style="left:1041px;top:653px" width="5" height="3"><path d="M0 0h5L2.500 3z" fill="#bdbdbd"/></svg><svg style="left:1054px;top:644px" width="14" height="11"><rect width="14" height="11" fill="#bdbdbd"/><circle cx="7" cy="5.500" r="3" fill="#535353"/></svg><svg style="left:1081px;top:643px" width="12" height="12"><circle cx="6" cy="6" r="5" fill="none" stroke="#bdbdbd" stroke-width="1.300"/><path d="M2.500 9.500A5 5 0 0 1 9.500 2.500z" fill="#bdbdbd"/></svg><svg style="left:1095px;top:653px" width="5" height="3"><path d="M0 0h5L2.500 3z" fill="#bdbdbd"/></svg><svg style="left:1107px;top:643px" width="14" height="11"><path d="M0 1.500h5l1.500 1.500h7.500v8h-14z" fill="#bdbdbd"/></svg><svg style="left:1134px;top:644px" width="11" height="11"><path d="M0 0h11v11h-6v-5h-5z" fill="#bdbdbd"/><path d="M0 6.500l4.500 4.500h-4.500z" fill="#999"/></svg><svg style="left:1161px;top:643px" width="12" height="13"><path d="M0.500 3h11M4 3V1h4v2" fill="none" stroke="#bdbdbd" stroke-width="1.200"/><path d="M1.500 4.500h9l-1 8h-7z" fill="#bdbdbd" stroke="#bdbdbd" stroke-width="1"/><path d="M4.300 6v5M6 6v5M7.700 6v5" stroke="#535353" stroke-width="0.900"/></svg><svg style="left:1190px;top:647px" width="10" height="10"><path d="M9 1v1M7 3h1M9 3v1M5 5h1M7 5h1M9 5v1M3 7h1M5 7h1M7 7h1M9 7v1M1 9h1M3 9h1M5 9h1M7 9h1M9 9v1" stroke="#777" stroke-width="1"/></svg><div style="left:980px;top:659px;width:222px;height:1px;background:#3a3a3a"></div><div style="left:980px;top:660px;width:222px;height:6px;background:#535353"></div><div style="left:1081px;top:661px;width:20px;height:3px;background:repeating-linear-gradient(90deg,#2f2f2f 0,#2f2f2f 1px,transparent 1px,transparent 2px)"></div><div style="left:27px;top:87px;width:39px;height:634px;background:#535353;border-right:1px solid #3a3a3a"></div><div style="left:66px;top:76px;width:2px;height:645px;background:#3a3a3a"></div><div style="left:36px;top:92px;width:20px;height:3px;background:repeating-linear-gradient(90deg,#2f2f2f 0,#2f2f2f 1px,transparent 1px,transparent 2px)"></div><div style="left:31px;top:104px;width:31px;height:24px;background:#3b3b3b;border:1px solid #333;border-radius:3px;box-shadow:0 1px 0 #666"></div><svg style="left:34.0px;top:104.5px" width="24" height="22"><path d="M3.800 4.300L3.800 14.700L11.100 10.600Z" fill="#c2c2c2"/><path d="M16.500 9.500v7M13 13h7" stroke="#c2c2c2" stroke-width="1.100" fill="none"/><path d="M16.500 8l-1.800 2.300h3.600zM16.500 18l-1.800-2.300h3.600zM11.500 13l2.300-1.800v3.600zM21.500 13l-2.300-1.800v3.600z" fill="#c2c2c2"/></svg><svg style="left:34.0px;top:130.5px" width="24" height="22"><rect x="5.500" y="4.500" width="13" height="12" fill="none" stroke="#c2c2c2" stroke-width="1.400" stroke-dasharray="3 2"/></svg><svg style="left:54px;top:149.0px" width="4" height="4"><path d="M4 0V4H0z" fill="#d8d8d8"/></svg><svg style="left:34.0px;top:156.5px" width="24" height="22"><path d="M4.500 5.500L12 10L19 4L17.500 14L8.500 15Z" fill="none" stroke="#c2c2c2" stroke-width="1.400" stroke-linejoin="round"/><path d="M8.500 15c-1 2 0 4 2 4.500" fill="none" stroke="#c2c2c2" stroke-width="1.200"/></svg><svg style="left:54px;top:175.0px" width="4" height="4"><path d="M4 0V4H0z" fill="#d8d8d8"/></svg><svg style="left:34.0px;top:182.5px" width="24" height="22"><path d="M10.500 10.500L19.500 19.500" stroke="#c2c2c2" stroke-width="2.200"/><path d="M8 2l1 4l3.500-2.500l-2 3.500l4 1l-4 1l1.500 3.500l-3.500-2l-1.500 4l-1-4l-3.500 2l2-3.500l-4-1l4-1.500l-2-3l3.500 2z" fill="#c2c2c2"/></svg><svg style="left:54px;top:201.0px" width="4" height="4"><path d="M4 0V4H0z" fill="#d8d8d8"/></svg><svg style="left:34.0px;top:208.5px" width="24" height="22"><path d="M7.500 2v13.500h13" fill="none" stroke="#c2c2c2" stroke-width="2"/><path d="M3 6.500h13.500v13" fill="none" stroke="#c2c2c2" stroke-width="2"/><path d="M8 15L19 3.500" stroke="#c2c2c2" stroke-width="1.200"/></svg><svg style="left:54px;top:227.0px" width="4" height="4"><path d="M4 0V4H0z" fill="#d8d8d8"/></svg><svg style="left:34.0px;top:234.5px" width="24" height="22"><path d="M5 19.500l1.500-4L14 8l2.500 2.500L9 18z" fill="none" stroke="#c2c2c2" stroke-width="1.300"/><path d="M13 6.500l5 5" stroke="#c2c2c2" stroke-width="2.200"/><path d="M15 7.500c1-3 3-5 5-4c1.500 1.500-1 4-4 5.500z" fill="#c2c2c2"/></svg><svg style="left:54px;top:253.0px" width="4" height="4"><path d="M4 0V4H0z" fill="#d8d8d8"/></svg><div style="left:31px;top:260px;width:30px;height:1px;background:#3f3f3f;box-shadow:0 1px 0 #626262"></div><svg style="left:34.0px;top:263.5px" width="24" height="22"><g transform="rotate(-40 14 10)"><rect x="5" y="6.500" width="18" height="8" rx="3.500" fill="#c2c2c2"/><rect x="11" y="7.500" width="6" height="6" fill="#888"/></g><ellipse cx="6.500" cy="12" rx="3.500" ry="5.500" fill="none" stroke="#c2c2c2" stroke-width="1" stroke-dasharray="1.500 1.500"/></svg><svg style="left:54px;top:282.0px" width="4" height="4"><path d="M4 0V4H0z" fill="#d8d8d8"/></svg><svg style="left:34.0px;top:290.0px" width="24" height="22"><path d="M20.500 2.500L11.500 12" stroke="#c2c2c2" stroke-width="2.300"/><path d="M11 10.500C7.500 11 7.500 16 2.500 17.500C7 20 13.500 18.500 14.500 14z" fill="#c2c2c2"/></svg><svg style="left:54px;top:308.5px" width="4" height="4"><path d="M4 0V4H0z" fill="#d8d8d8"/></svg><svg style="left:34.0px;top:316.0px" width="24" height="22"><circle cx="12" cy="5" r="3" fill="#c2c2c2"/><path d="M10.500 7h3l0.500 5h5v3.500h-14V12h5z" fill="#c2c2c2"/><rect x="5" y="17" width="14" height="1.500" fill="#c2c2c2"/></svg><svg style="left:54px;top:334.5px" width="4" height="4"><path d="M4 0V4H0z" fill="#d8d8d8"/></svg><svg style="left:34.0px;top:341.5px" width="24" height="22"><path d="M20.500 3L12 12" stroke="#c2c2c2" stroke-width="2"/><path d="M12.500 11.500C9.500 12 9 15.500 4.500 17C8 19 13.500 17.500 14.500 13.500z" fill="#c2c2c2"/><path d="M4 8C6 3.500 11 3 14 5" fill="none" stroke="#c2c2c2" stroke-width="1.500"/><path d="M2.500 5.500l1 4.500l4-1.500z" fill="#c2c2c2"/></svg><svg style="left:54px;top:360.0px" width="4" height="4"><path d="M4 0V4H0z" fill="#d8d8d8"/></svg><svg style="left:34.0px;top:367.5px" width="24" height="22"><path d="M9 6h12l-5 6H4z" fill="#c2c2c2"/><path d="M4 12.500h12v5H4z" fill="#a8a8a8"/><path d="M16 12.500l5-6v5l-5 6z" fill="#8c8c8c"/></svg><svg style="left:54px;top:386.0px" width="4" height="4"><path d="M4 0V4H0z" fill="#d8d8d8"/></svg><div style="left:38px;top:398px;width:17px;height:13px;border:1px solid #d0d0d0;background:linear-gradient(135deg,#e6e6e6,#555)"></div><svg style="left:54px;top:412.500px" width="4" height="4"><path d="M4 0V4H0z" fill="#d8d8d8"/></svg><svg style="left:34.0px;top:419.5px" width="24" height="22"><path d="M12 2.500C14 7.500 17 10 17 14a5 5 0 0 1-10 0C7 10 10 7.500 12 2.500z" fill="#c0c0c0"/></svg><svg style="left:54px;top:438.0px" width="4" height="4"><path d="M4 0V4H0z" fill="#d8d8d8"/></svg><svg style="left:34.0px;top:445.0px" width="24" height="22"><circle cx="10.500" cy="8.500" r="5" fill="#c0c0c0"/><path d="M13.500 12.500L19 19" stroke="#c2c2c2" stroke-width="2.400"/></svg><svg style="left:54px;top:463.5px" width="4" height="4"><path d="M4 0V4H0z" fill="#d8d8d8"/></svg><div style="left:31px;top:471px;width:30px;height:1px;background:#3f3f3f;box-shadow:0 1px 0 #626262"></div><svg style="left:34.0px;top:474.5px" width="24" height="22"><path d="M4 18.500L6.500 10L13.500 5.500L19 11L14.500 16.500Z" fill="#c2c2c2"/><path d="M4.500 18L11 12" stroke="#535353" stroke-width="1"/><circle cx="11.500" cy="11.500" r="1.300" fill="#535353"/><path d="M14.500 4l6 6l-1.500 1.500l-6-6z" fill="#c2c2c2"/></svg><svg style="left:54px;top:493.0px" width="4" height="4"><path d="M4 0V4H0z" fill="#d8d8d8"/></svg><div style="left:38px;top:500px;font-family:'Liberation Serif',serif;font-size:21px;line-height:22px;color:#c2c2c2">T</div><svg style="left:54px;top:519px" width="4" height="4"><path d="M4 0V4H0z" fill="#d8d8d8"/></svg><svg style="left:34.0px;top:526.5px" width="24" height="22"><path d="M7.500 2.500v14l3.500-3l2.500 5.500l2.500-1l-2.500-5.500l4.500-0.500z" fill="#2a2a2a" stroke="#e0e0e0" stroke-width="1.200" stroke-linejoin="round"/></svg><svg style="left:54px;top:545.0px" width="4" height="4"><path d="M4 0V4H0z" fill="#d8d8d8"/></svg><svg style="left:34.0px;top:552.5px" width="24" height="22"><path d="M5 18L18.500 4.500" stroke="#c2c2c2" stroke-width="1.300"/></svg><svg style="left:54px;top:571.0px" width="4" height="4"><path d="M4 0V4H0z" fill="#d8d8d8"/></svg><div style="left:31px;top:578px;width:30px;height:1px;background:#3f3f3f;box-shadow:0 1px 0 #626262"></div><svg style="left:34.0px;top:581.5px" width="24" height="22"><g stroke="#c2c2c2" stroke-width="2.300" stroke-linecap="round" fill="none"><path d="M8.800 12L7.600 7"/><path d="M11.300 11L10.900 5.300"/><path d="M13.900 11L14.400 5.600"/><path d="M16.300 12L17.600 7.800"/><path d="M8.500 16.500L4.300 12"/></g><path d="M7.600 11H17.300V15C17.300 18 15.500 19.800 12.700 19.800C10 19.800 8.300 18.500 7.600 16Z" fill="#c2c2c2"/></svg><svg style="left:54px;top:600.0px" width="4" height="4"><path d="M4 0V4H0z" fill="#d8d8d8"/></svg><svg style="left:34.0px;top:607.5px" width="24" height="22"><circle cx="10" cy="9" r="5.500" fill="#8a8a8a" stroke="#c2c2c2" stroke-width="1.600"/><path d="M14 13.500L19.500 19.500" stroke="#c2c2c2" stroke-width="2.600"/></svg><div style="left:35px;top:638px;width:7px;height:7px;background:#bbb"></div><div style="left:31px;top:634px;width:8px;height:8px;background:#222;border:1px solid #ccc"></div><svg style="left:49px;top:633px" width="11" height="11"><path d="M2.500 3.500h4.500a1.500 1.500 0 0 1 1.500 1.500v3" fill="none" stroke="#ddd" stroke-width="1.200"/><path d="M0 3.500L3.500 0.500V6.500zM8.500 11L5.500 7.500h6z" fill="#ddd"/></svg><div style="left:41px;top:660px;width:20px;height:20px;background:#fff;border:1px solid #333"></div><div style="left:32px;top:651px;width:19px;height:19px;background:#ec1c24;border:1px solid #f4f4f4;outline:1px solid #333"></div><div style="left:37px;top:687px;width:18px;height:14px;border:1px solid #ddd;background:#3a3a3a"></div><div style="left:41px;top:689px;width:10px;height:10px;border:1.500px dotted #ddd;border-radius:5px"></div><div style="left:43px;top:714px;width:12px;height:7px;border:1px solid #ddd;border-bottom:none;background:#888"></div><div style="left:38px;top:718px;width:6px;height:3px;border-top:1px solid #ddd;border-left:1px solid #ddd"></div><div style="left:27px;top:76px;width:1px;height:645px;background:#3c3c3c"></div><div style="left:0;top:728px;width:1366px;height:40px;background:#c6b48e"></div><div style="left:0;top:728px;width:60px;height:40px;background:#d29b37"></div><div style="left:60px;top:728px;width:6px;height:40px;background:#c9b68b;border-right:1px solid #ddd3bd"></div><div style="left:159px;top:719px;font-size:14px;line-height:16px;color:#857f73;transform-origin:0 0;transform:scaleX(0.8747);height:13px;overflow:hidden;">Presentation Folders</div><div style="left:424px;top:719px;font-size:13px;line-height:15px;color:#8f8a80;transform-origin:0 0;transform:scaleX(0.9627);">Hello:</div><div style="left:424px;top:750px;font-size:13px;line-height:15px;color:#a8966d;transform-origin:0 0;transform:scaleX(0.9741);">Our company, xlp.xyz mass markets print products from trade printers in the US and Canada. Our EIN is 27-5079841 and our</div><div style="left:159px;top:758px;font-size:13px;line-height:15px;color:#a08f69;font-weight:bold;transform-origin:0 0;transform:scaleX(0.9031);">Offset Commercial Printing</div><svg style="left:12px;top:735px" width="27" height="27"><path d="M0 4L11.500 2.300V12.700H0zM13 2.100L27 0V12.700H13zM0 14.200H11.500V24.700L0 23zM13 14.200H27V27L13 24.900z" fill="#fff"/></svg><div style="left:65px;top:735px;width:32px;height:22px;background:linear-gradient(#4aa3e0,#2a7cc4);border:1px solid #6cb8ea;border-radius:2px"></div><svg style="left:65px;top:735px" width="32" height="30"><circle cx="9" cy="9" r="4.500" fill="none" stroke="#fff" stroke-width="1.400"/><path d="M9 9V3.500A5.500 5.500 0 0 1 14 7z" fill="#f9a11b"/><rect x="18" y="4" width="10" height="4" fill="#fff"/><rect x="20" y="5" width="7" height="2" fill="#1e6fc0"/><rect x="18" y="11" width="10" height="4" fill="#fff"/><rect x="20" y="12" width="7" height="2" fill="#1e6fc0"/><circle cx="7.500" cy="17" r="1" fill="#fff"/><circle cx="11.500" cy="17" r="1" fill="#f9a11b"/><ellipse cx="16" cy="25" rx="7" ry="4" fill="#ddd"/><ellipse cx="16" cy="24" rx="7" ry="3.500" fill="#f4f4f4"/></svg><svg style="left:127px;top:733px" width="32" height="32"><path d="M11 4L29 7L24 30L2 24Z" fill="#e8f0f4" stroke="#9ab" stroke-width="0.600"/><path d="M11 5L25 7.500L19 27L3 23Z" fill="#5fc4cf"/><path d="M11 5L25 7.500L22 17L7 14Z" fill="#8fdde2"/><path d="M12 3l1 3M15 3.500l1 3M18 4l1 3M21 4.500l1 3M24 5l1 3M27 5.500l1 3" stroke="#555" stroke-width="1"/></svg><div style="left:176px;top:729px;width:58px;height:39px;background:rgba(238,232,215,.55);border:1px solid #f3efe4;border-bottom:none;border-radius:2px"></div><div style="left:191px;top:733px;width:28px;height:27px;background:#1c1a5e;border:2px solid #8bb9ee"></div><div style="left:195px;top:735px;font-size:19px;line-height:22px;color:#8ec0f6;font-weight:bold;transform-origin:0 0;transform:scaleX(0.8606);">Ps</div><div style="left:238px;top:729px;width:52px;height:39px;background:rgba(222,212,186,.35);border:1px solid rgba(240,234,215,.6);border-bottom:none"></div><div style="left:291px;top:729px;width:5px;height:39px;border:1px solid rgba(240,234,215,.5);border-bottom:none;border-left:none"></div><svg style="left:249px;top:733px" width="30" height="30"><circle cx="15" cy="15" r="14.500" fill="#db4437"/><path d="M15 15L2.440 7.750A14.500 14.500 0 0 0 15 29.500L21.500 18.750z" fill="#0f9d58"/><path d="M15 15L21.500 18.750L15 29.500A14.500 14.500 0 0 0 27.560 7.750H15z" fill="#ffcd40"/><path d="M15 15V7.750H27.560A14.500 14.500 0 0 0 2.440 7.750L8.700 18.600z" fill="#db4437"/><circle cx="15" cy="15" r="6.600" fill="#f1f1f1"/><circle cx="15" cy="15" r="5.300" fill="#4285f4"/></svg><svg style="left:316px;top:733px" width="28" height="32"><ellipse cx="14" cy="9" rx="8" ry="6" fill="#f9a61b"/><rect x="5" y="9" width="18" height="3" rx="1" fill="#f08c14"/><circle cx="14" cy="14" r="5" fill="#f6c99a"/><path d="M4 31C4 22 8 19 14 19s10 3 10 12z" fill="#2e6fb5"/><rect x="9" y="23" width="10" height="6" fill="#dfe9f5"/></svg><div style="left:362px;top:729px;width:58px;height:39px;border:1px solid rgba(235,228,205,.45);border-bottom:none;background:rgba(215,205,175,.25)"></div><svg style="left:375px;top:734px" width="32" height="30"><path d="M1 6h10l2 3h18v19H1z" fill="#f5d673" stroke="#d8b44c" stroke-width="0.800"/><path d="M1 11h30v17H1z" fill="#fbe594"/><rect x="4" y="3.500" width="6" height="2.500" fill="#4caf50"/><rect x="17" y="5" width="6" height="2.500" fill="#e0524a"/><path d="M5 28v-7a3 3 0 0 1 3-3h16a3 3 0 0 1 3 3v7h-5v-5H10v5z" fill="#4db3e6" stroke="#2a8cc4" stroke-width="0.800"/></svg><svg style="left:437px;top:733px" width="32" height="30"><rect x="12" y="3" width="19" height="24" fill="#fff" stroke="#2b579a" stroke-width="1"/><path d="M18 8h11M18 12h11M18 16h11M18 20h11" stroke="#2b579a" stroke-width="1.600"/><path d="M0 3.500L18 0v30L0 26.500z" fill="#2b579a"/></svg><div style="left:441.5px;top:740px;font-size:13px;line-height:15px;color:#fff;font-weight:bold;transform-origin:0 0;transform:scaleX(0.9780);">W</div><svg style="left:500px;top:733px" width="32" height="30"><rect x="12" y="3" width="19" height="24" fill="#fff" stroke="#217346" stroke-width="1"/><path d="M18 7h11M18 11h11M18 15h11M18 19h11M18 23h11M22 5v20M26 5v20" stroke="#217346" stroke-width="1.200"/><path d="M0 3.500L18 0v30L0 26.500z" fill="#217346"/></svg><div style="left:504.5px;top:740px;font-size:13px;line-height:15px;color:#fff;font-weight:bold;transform-origin:0 0;transform:scaleX(1.1532);">X</div><div style="left:561px;top:732px;width:32px;height:32px;background:#b30a0f;border:1.500px dashed #7a0508"></div><div style="left:565px;top:733px;font-size:25px;line-height:28px;color:#fff;font-weight:bold;transform-origin:0 0;transform:scaleX(0.9002);font-style:italic;">Fz</div><svg style="left:624px;top:732px" width="30" height="32"><rect x="1" y="2" width="28" height="29" fill="#fff" stroke="#bbb" stroke-width="0.800"/><rect x="1" y="2" width="28" height="3" fill="#c8161d"/><path d="M4 27C9 24 13 17 14 10c0.500-3 3-2 2 1c-1 4 3 10 9 11c3 0.500 2 3-1 2C19 22.500 10 24 4 27z" fill="none" stroke="#d5181f" stroke-width="1.800"/></svg><div style="left:672px;top:729px;width:58px;height:39px;background:rgba(226,217,192,.4);border:1px solid rgba(240,234,215,.7);border-bottom:none"></div><svg style="left:684px;top:735px" width="34" height="28"><rect x="2" y="2" width="15" height="15" transform="rotate(-14 9 9)" fill="#a9d6a0"/><rect x="8" y="9" width="13" height="13" fill="#9fc3ea" transform="rotate(-8 14 15)"/><rect x="15" y="5" width="17" height="17" transform="rotate(-16 23 13)" fill="#f6e069"/></svg><div style="left:733px;top:729px;width:59px;height:39px;background:rgba(226,217,192,.4);border:1px solid rgba(240,234,215,.7);border-bottom:none"></div><svg style="left:751px;top:733px" width="25" height="32"><rect x="0.500" y="0.500" width="24" height="31" rx="2" fill="#dcecf9" stroke="#5b9bd5" stroke-width="1"/><rect x="3" y="3" width="19" height="8" fill="#f4faff" stroke="#7fb0de" stroke-width="0.800"/><g fill="#5b9bd5"><rect x="3" y="14" width="4" height="3"/><rect x="8" y="14" width="4" height="3"/><rect x="13" y="14" width="4" height="3"/><rect x="18" y="14" width="4" height="3"/><rect x="3" y="19" width="4" height="3"/><rect x="8" y="19" width="4" height="3"/><rect x="13" y="19" width="4" height="3"/><rect x="3" y="24" width="4" height="3"/><rect x="8" y="24" width="4" height="3"/><rect x="13" y="24" width="4" height="3"/></g><rect x="18" y="19" width="4" height="8" fill="#f9a11b"/></svg><div style="left:767px;top:736px;font-size:8px;line-height:9px;color:#345;transform-origin:0 0;transform:scaleX(1.0114);">0</div><div style="left:1169px;top:728px;width:13px;height:40px;background:#b5a27a"></div><div style="left:1351px;top:728px;width:15px;height:40px;background:#b9a67e"></div><svg style="left:1195px;top:745px" width="9" height="6"><path d="M0 6L4.500 0L9 6z" fill="#fff"/></svg><svg style="left:1216px;top:740px" width="16" height="16"><path d="M0 2.400L6.800 1.400V7.500H0zM7.800 1.200L16 0V7.500H7.800zM0 8.500H6.800V14.600L0 13.600zM7.800 8.500H16V16L7.800 14.800z" fill="none" stroke="#fff" stroke-width="1.400"/></svg><svg style="left:1240px;top:740px" width="16" height="16"><path d="M1.500 0v16" stroke="#fff" stroke-width="1.400"/><path d="M2.500 1.500c3-1.500 5 1.500 8 0.500c1.500-0.500 2.500 0 4 0.500l-2 3l2 3.500c-2-1-3.500-0.500-5 0c-2.500 1-4.500-1-7 0z" fill="none" stroke="#fff" stroke-width="1.200"/></svg><svg style="left:1264px;top:739px" width="18" height="17"><rect x="8.500" y="3.500" width="8" height="12" fill="none" stroke="#fff" stroke-width="1.300"/><rect x="10.500" y="1.500" width="4" height="2" fill="#fff"/><path d="M3.500 1v4M6.500 1v4M2 5h6v3c0 1.500-1 2.500-2.500 2.500v3h-1v-3C3 10.500 2 9.500 2 8z" fill="#fff" stroke="#fff" stroke-width="0.600"/></svg><div style="left:1299px;top:733px;font-size:12px;line-height:14px;color:#fff;transform-origin:0 0;transform:scaleX(0.9345);">12:45 PM</div><div style="left:1297.5px;top:751px;font-size:12px;line-height:14px;color:#fff;transform-origin:0 0;transform:scaleX(0.9553);">1/18/2016</div></body></html>
